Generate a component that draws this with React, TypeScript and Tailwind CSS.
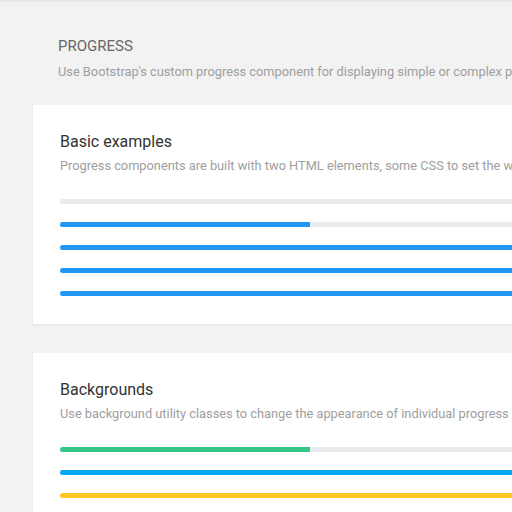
const basic = [0, 50, 100, 100, 100]

const backgrounds = [
  { value: 50, color: 'bg-[#32c787]' },
  { value: 100, color: 'bg-[#03a9f4]' },
  { value: 100, color: 'bg-[#ffc721]' },
  { value: 100, color: 'bg-[#ff6b68]' },
]

function Bar({ value, color = 'bg-[#2196f3]' }: { value: number; color?: string }) {
  return (
    <div className="h-[5px] w-full rounded-sm bg-[#e9ecef] overflow-hidden">
      <div className={`h-full ${color}`} style={{ width: `${value}%` }} />
    </div>
  )
}

function Card({ title, text, children }: { title: string; text: string; children: React.ReactNode }) {
  return (
    <div className="w-[554px] shrink-0 bg-white shadow-[0_1px_2px_rgba(0,0,0,0.075)] px-[27px] pt-[28px] pb-[28px]">
      <h2 className="text-[16px] leading-[18px] text-[#333] font-normal">{title}</h2>
      <p className="mt-[5px] text-[12.8px] leading-[20px] text-[#9e9e9e] whitespace-nowrap">{text}</p>
      <div className="mt-[23px] flex flex-col gap-[18px]">{children}</div>
    </div>
  )
}

export default function App() {
  return (
    <div className="min-h-[512px] w-[620px] bg-[#f2f2f2] font-['Roboto',sans-serif] overflow-hidden">
      <div className="h-[3px] bg-gradient-to-b from-[#e2e2e2] to-[#f2f2f2]" />
      <div className="pl-[58px] pt-[33px]">
        <h1 className="text-[15px] leading-[20px] text-[#676767] uppercase font-normal">Progress</h1>
        <p className="mt-[6px] text-[12.8px] leading-[20px] text-[#9e9e9e] whitespace-nowrap">
          Use Bootstrap's custom progress component for displaying simple or complex progress bars.
        </p>
      </div>
      <div className="pl-[33px] pt-[23px] flex flex-col gap-[29px]">
        <Card
          title="Basic examples"
          text="Progress components are built with two HTML elements, some CSS to set the width, and a few attributes."
        >
          {basic.map((v, i) => (
            <Bar key={i} value={v} />
          ))}
        </Card>
        <Card
          title="Backgrounds"
          text="Use background utility classes to change the appearance of individual progress bars."
        >
          {backgrounds.map((b, i) => (
            <Bar key={i} value={b.value} color={b.color} />
          ))}
        </Card>
      </div>
    </div>
  )
}
